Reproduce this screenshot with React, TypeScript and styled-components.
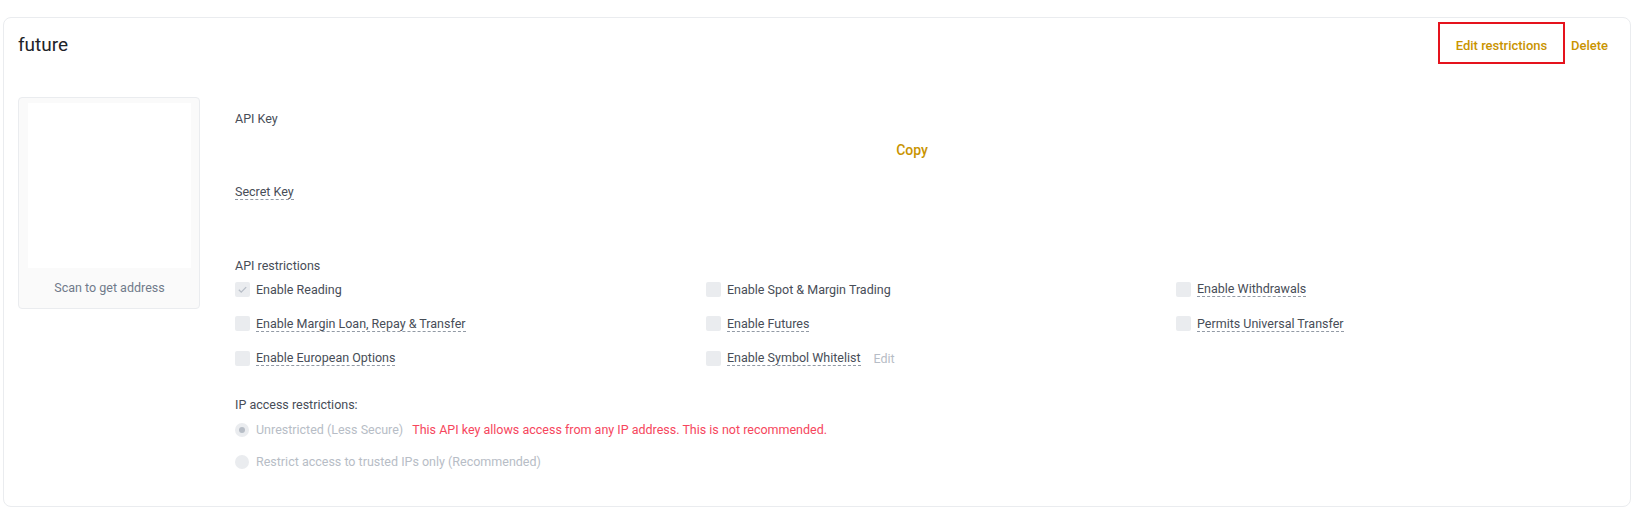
import React from "react";
import styled, { createGlobalStyle } from "styled-components";

const palette = {
  title: "#1e2329",
  text: "#474d57",
  muted: "#707a8a",
  disabled: "#b7bdc6",
  line: "#eaecef",
  gold: "#c99400",
  danger: "#f6465d",
  dash: "#929aa5",
};

const GlobalStyle = createGlobalStyle`
  body {
    margin: 0;
    background: #fff;
    font-family: Roboto, "Liberation Sans", Arial, sans-serif;
    color: ${palette.text};
  }
`;

const Page = styled.div`
  padding: 17px 6px 7px 3px;
`;

const Card = styled.div`
  border: 1px solid ${palette.line};
  border-radius: 8px;
  height: 490px;
  box-sizing: border-box;
`;

const Header = styled.div`
  display: flex;
  justify-content: space-between;
  align-items: center;
  padding: 4px 22px 0 14px;
`;

const Title = styled.div`
  font-size: 19px;
  line-height: 24px;
  padding-top: 4px;
  color: ${palette.title};
`;

const Actions = styled.div`
  display: flex;
  align-items: center;
`;

const ActionButton = styled.button<{ $marked?: boolean }>`
  font-family: inherit;
  font-size: 13px;
  font-weight: 500;
  color: ${palette.gold};
  background: none;
  cursor: pointer;
  padding: 4px 0 0;
  height: 42px;
  border: ${(p) => (p.$marked ? "2px solid #e5131d" : "none")};
  width: ${(p) => (p.$marked ? "127px" : "auto")};
  margin-left: ${(p) => (p.$marked ? "0" : "6px")};
`;

const Body = styled.div`
  display: flex;
  gap: 35px;
  padding: 33px 41px 0 14px;
`;

const QrBox = styled.div`
  width: 182px;
  height: 212px;
  box-sizing: border-box;
  flex-shrink: 0;
  border: 1px solid ${palette.line};
  border-radius: 4px;
  background: #fafafa;
  padding: 5px 8px 0 9px;
`;

const QrImage = styled.div`
  height: 165px;
  background: #fff;
`;

const QrCaption = styled.div`
  text-align: center;
  font-size: 12.5px;
  color: ${palette.muted};
  margin-top: 12px;
`;

const Details = styled.div`
  flex: 1;
  padding-top: 12px;
  font-size: 12.5px;
`;

const Label = styled.div<{ $gap?: number }>`
  line-height: 20px;
  color: ${palette.text};
  margin-top: ${(p) => p.$gap ?? 0}px;
`;

const Dashed = styled.span`
  display: inline-block;
  line-height: 15px;
  border-bottom: 1px dashed ${palette.dash};
`;

const CopyRow = styled.div`
  display: flex;
  justify-content: center;
  margin-top: 13px;
  line-height: 20px;
`;

const CopyButton = styled.button`
  font-family: inherit;
  font-size: 14px;
  font-weight: 500;
  color: ${palette.gold};
  background: none;
  border: none;
  padding: 0;
  cursor: pointer;
`;

const PermGrid = styled.div`
  display: grid;
  grid-template-columns: 471px 470px 1fr;
  grid-auto-rows: 20px;
  row-gap: 14.5px;
  margin-top: 3px;
`;

const Option = styled.label`
  display: flex;
  align-items: center;
  gap: 6px;
  color: ${palette.text};
  white-space: nowrap;
`;

const Box = styled.span`
  width: 15px;
  height: 15px;
  border-radius: 2px;
  background: ${palette.line};
  display: flex;
  align-items: center;
  justify-content: center;
  flex-shrink: 0;
`;

const EditLink = styled.span`
  color: ${palette.disabled};
  margin-left: 7px;
`;

const RadioRow = styled.div<{ $gap: number }>`
  display: flex;
  align-items: center;
  gap: 7px;
  line-height: 20px;
  margin-top: ${(p) => p.$gap}px;
  color: ${palette.disabled};
`;

const Radio = styled.span<{ $checked?: boolean }>`
  width: 14px;
  height: 14px;
  border-radius: 50%;
  background: ${palette.line};
  display: flex;
  align-items: center;
  justify-content: center;
  &::after {
    content: "";
    width: 6px;
    height: 6px;
    border-radius: 50%;
    background: ${(p) => (p.$checked ? palette.disabled : "transparent")};
  }
`;

const Warning = styled.span`
  color: ${palette.danger};
  margin-left: 2px;
`;

interface Perm {
  label: string;
  dashed?: boolean;
  checked?: boolean;
  edit?: boolean;
}

const perms: Perm[] = [
  { label: "Enable Reading", checked: true },
  { label: "Enable Spot & Margin Trading" },
  { label: "Enable Withdrawals", dashed: true },
  { label: "Enable Margin Loan, Repay & Transfer", dashed: true },
  { label: "Enable Futures", dashed: true },
  { label: "Permits Universal Transfer", dashed: true },
  { label: "Enable European Options", dashed: true },
  { label: "Enable Symbol Whitelist", dashed: true, edit: true },
];

const Check = () => (
  <svg width="11" height="11" viewBox="0 0 12 12" fill="none">
    <path d="M2 6.3l2.6 2.6L10 3.4" stroke={palette.disabled} strokeWidth="1.4" />
  </svg>
);

const App = () => {
  return (
    <Page>
      <GlobalStyle />
      <Card>
        <Header>
          <Title>future</Title>
          <Actions>
            <ActionButton $marked>Edit restrictions</ActionButton>
            <ActionButton>Delete</ActionButton>
          </Actions>
        </Header>
        <Body>
          <QrBox>
            <QrImage />
            <QrCaption>Scan to get address</QrCaption>
          </QrBox>
          <Details>
            <Label>API Key</Label>
            <CopyRow>
              <CopyButton>Copy</CopyButton>
            </CopyRow>
            <Label $gap={24}>
              <Dashed>Secret Key</Dashed>
            </Label>
            <Label $gap={54}>API restrictions</Label>
            <PermGrid>
              {perms.map((p) => (
                <Option key={p.label}>
                  <Box>{p.checked && <Check />}</Box>
                  {p.dashed ? <Dashed>{p.label}</Dashed> : <span>{p.label}</span>}
                  {p.edit && <EditLink>Edit</EditLink>}
                </Option>
              ))}
            </PermGrid>
            <Label $gap={27}>IP access restrictions:</Label>
            <RadioRow $gap={5}>
              <Radio $checked />
              <span>Unrestricted (Less Secure)</span>
              <Warning>This API key allows access from any IP address. This is not recommended.</Warning>
            </RadioRow>
            <RadioRow $gap={12}>
              <Radio />
              <span>Restrict access to trusted IPs only (Recommended)</span>
            </RadioRow>
          </Details>
        </Body>
      </Card>
    </Page>
  );
};

export default App;
